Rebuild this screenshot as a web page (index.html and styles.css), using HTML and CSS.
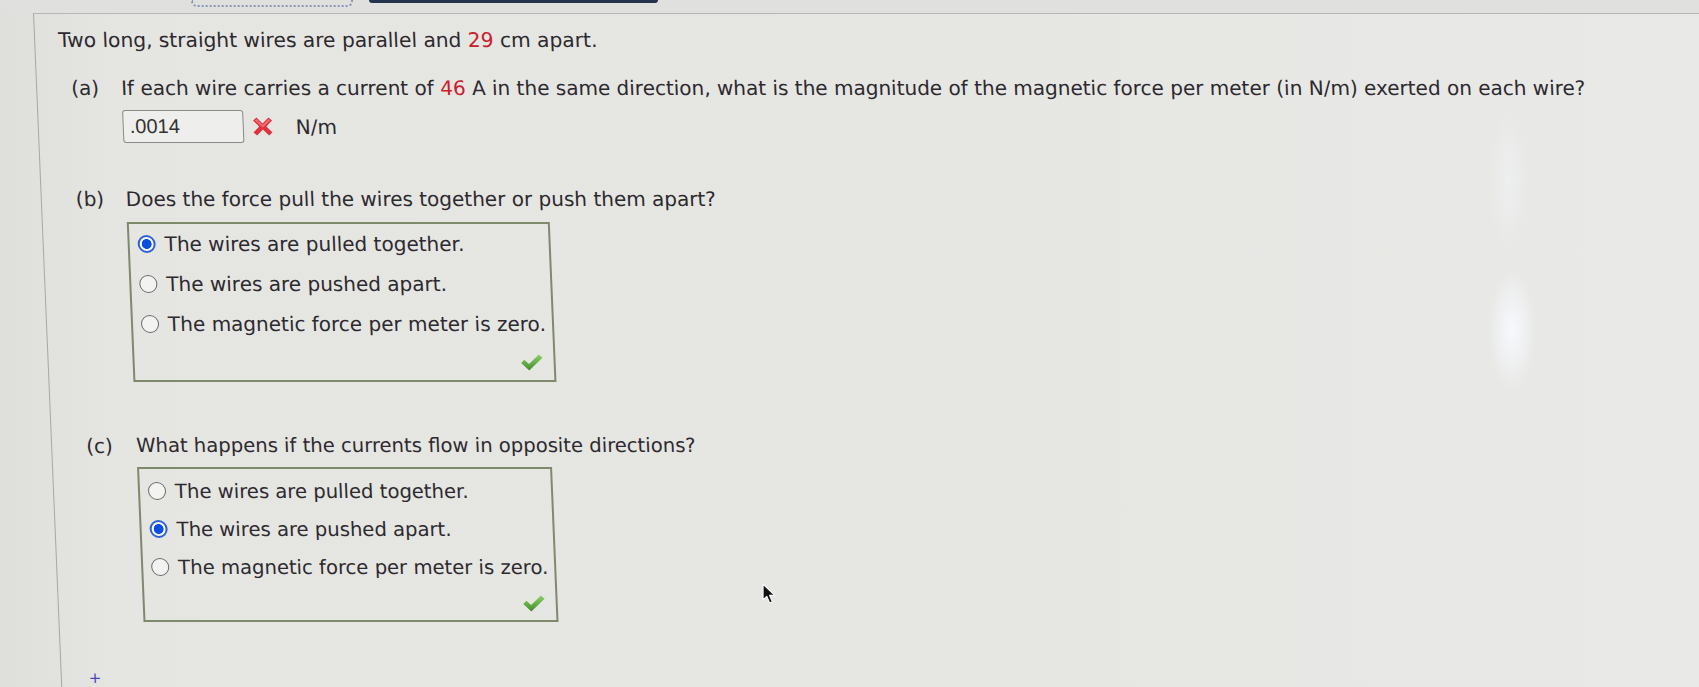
FILE: index.html
```html
<!DOCTYPE html>
<html lang="en">
<head>
<meta charset="utf-8">
<title>Parallel wires</title>
<link rel="stylesheet" href="styles.css">
</head>
<body>
<div class="page">
  <div class="topstrip">
    <div class="focus-ring"></div>
    <div class="navbar"></div>
  </div>
  <div class="frame">
    <p class="intro">Two long, straight wires are parallel and <span class="num">29</span> cm apart.</p>

    <div class="part part-a">
      <span class="label">(a)</span>
      <div class="content">
        <p class="question">If each wire carries a current of <span class="num">46</span> A in the same direction, what is the magnitude of the magnetic force per meter (in N/m) exerted on each wire?</p>
        <div class="answer-row">
          <span class="answer-input">.0014</span>
          <svg class="wrong" width="22" height="19" viewBox="0 0 22 19">
            <path d="M1.5 3.6 L5 0.6 L11 6.4 L17 0.6 L20.5 3.6 L14.6 9.5 L20.5 15.4 L17 18.4 L11 12.6 L5 18.4 L1.5 15.4 L7.4 9.5 Z" fill="#e0323c"/>
            <path d="M3.2 3.6 L5 2.1 L11 7.9 L17 2.1 L18.8 3.6 L11 10.6 Z" fill="#f06a72"/>
          </svg>
          <span class="unit">N/m</span>
        </div>
      </div>
    </div>

    <div class="part part-b">
      <span class="label">(b)</span>
      <div class="content">
        <p class="question">Does the force pull the wires together or push them apart?</p>
        <div class="choice-box box-b">
          <div class="option"><span class="radio checked"></span><span>The wires are pulled together.</span></div>
          <div class="option"><span class="radio"></span><span>The wires are pushed apart.</span></div>
          <div class="option"><span class="radio"></span><span>The magnetic force per meter is zero.</span></div>
          <div class="check-row">
            <svg class="check" width="23" height="17" viewBox="0 0 23 17">
              <defs><linearGradient id="g1" x1="0" y1="0" x2="0" y2="1"><stop offset="0" stop-color="#8fd068"/><stop offset="1" stop-color="#3e8f2b"/></linearGradient></defs>
              <path d="M0.5 9 L3.8 5.8 L8.3 10 L18.5 0.6 L22 3.8 L8.3 16.4 Z" fill="url(#g1)"/>
            </svg>
          </div>
        </div>
      </div>
    </div>

    <div class="part part-c">
      <span class="label">(c)</span>
      <div class="content">
        <p class="question">What happens if the currents flow in opposite directions?</p>
        <div class="choice-box box-c">
          <div class="option"><span class="radio"></span><span>The wires are pulled together.</span></div>
          <div class="option"><span class="radio checked"></span><span>The wires are pushed apart.</span></div>
          <div class="option"><span class="radio"></span><span>The magnetic force per meter is zero.</span></div>
          <div class="check-row">
            <svg class="check" width="23" height="17" viewBox="0 0 23 17">
              <defs><linearGradient id="g2" x1="0" y1="0" x2="0" y2="1"><stop offset="0" stop-color="#8fd068"/><stop offset="1" stop-color="#3e8f2b"/></linearGradient></defs>
              <path d="M0.5 9 L3.8 5.8 L8.3 10 L18.5 0.6 L22 3.8 L8.3 16.4 Z" fill="url(#g2)"/>
            </svg>
          </div>
        </div>
      </div>
    </div>

    <div class="more">+</div>
  </div>

  <svg class="cursor" width="15" height="22" viewBox="0 0 15 22">
    <path d="M1 1 L1 17 L4.8 13.4 L7.6 20 L10.4 18.8 L7.7 12.4 L12.8 12.4 Z" fill="#111" stroke="#f4f4f4" stroke-width="1.3" stroke-linejoin="round"/>
  </svg>
</div>
</body>
</html>
```

FILE: styles.css
```css
html, body {
  margin: 0;
  padding: 0;
}

body {
  width: 1699px;
  height: 687px;
  overflow: hidden;
  font-family: "DejaVu Sans", Verdana, sans-serif;
  color: #2d2a2f;
  background: #e4e4e1;
}

.page {
  position: relative;
  width: 1699px;
  height: 687px;
  overflow: hidden;
  background:
    radial-gradient(ellipse 24px 60px at 1512px 330px, rgba(247, 250, 255, 0.95), rgba(240, 243, 250, 0) 100%),
    radial-gradient(ellipse 20px 70px at 1508px 180px, rgba(243, 245, 249, 0.5), rgba(240, 243, 250, 0) 100%),
    linear-gradient(90deg, #dfdfdc 0px, #e5e5e2 120px, #e6e6e3 900px, #e9e9e7 1699px);
}

.topstrip {
  height: 13px;
  display: flex;
  align-items: flex-start;
  background: #e0e0de;
}

.focus-ring {
  margin-left: 191px;
  width: 158px;
  height: 5px;
  border: 2px dotted #8696b4;
  border-top: none;
  border-radius: 0 0 6px 6px;
}

.navbar {
  margin-left: 16px;
  width: 289px;
  height: 3px;
  background: #24334e;
  border-radius: 0 0 3px 3px;
}

.frame {
  margin-left: 33px;
  height: 720px;
  border-top: 1px solid #b7b7b6;
  border-left: 1px solid #a7a7a6;
  padding-left: 23px;
  transform: skewX(2.4deg);
  transform-origin: 0 0;
}

.intro,
.question {
  margin: 0;
  font-size: 20px;
  line-height: 24px;
  white-space: nowrap;
}

.intro {
  padding-top: 14px;
  font-size: 20.2px;
}

.num {
  color: #c9202b;
}

.part {
  display: grid;
  grid-template-columns: 50px auto;
  margin-left: 11px;
}

.label {
  font-size: 20px;
  line-height: 24px;
}

.part-a {
  margin-top: 24px;
}

.part-b {
  margin-top: 44px;
}

.part-c {
  margin-top: 52px;
}

.part-c .question,
.part-c .option {
  font-size: 19.6px;
}

.answer-row {
  display: flex;
  align-items: center;
  margin-top: 10px;
}

.answer-input {
  box-sizing: border-box;
  width: 121px;
  height: 33px;
  padding-left: 6px;
  border: 1px solid #8a8a89;
  border-radius: 3px;
  background: #eeeeec;
  font-family: "Liberation Sans", Arial, sans-serif;
  font-size: 20px;
  line-height: 31px;
  color: #333;
}

.wrong {
  margin-left: 8px;
}

.unit {
  margin-left: 22px;
  font-size: 20px;
  line-height: 24px;
}

.choice-box {
  width: fit-content;
  border: 2px solid #7f8a6c;
  padding: 0 6px 0 8px;
}

.box-b {
  margin-top: 11px;
}

.box-c {
  margin-top: 9px;
  padding-top: 3px;
}

.option {
  display: flex;
  align-items: center;
  gap: 9px;
  height: 40px;
  font-size: 20px;
  white-space: nowrap;
}

.box-c .option {
  height: 38px;
}

.radio {
  box-sizing: border-box;
  width: 18px;
  height: 18px;
  flex: none;
  border-radius: 50%;
  border: 1.5px solid #6a6a6c;
  background: #f3f3f2;
}

.radio.checked {
  border: 2px solid #2e63d4;
  background: radial-gradient(circle, #0c4fe0 0 4.6px, #f6f6f6 5.2px);
}

.check-row {
  display: flex;
  justify-content: flex-end;
  align-items: center;
  height: 36px;
}

.box-c .check-row {
  height: 34px;
}

.check {
  margin-right: 4px;
}

.more {
  margin-top: 50px;
  margin-left: 4px;
  font-size: 15px;
  line-height: 12px;
  color: #4c40bd;
}

.cursor {
  position: absolute;
  left: 762px;
  top: 583px;
}
```
